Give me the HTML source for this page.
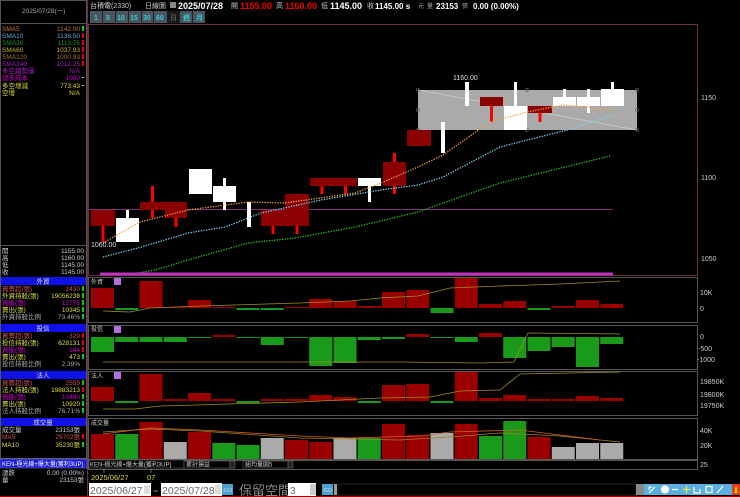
<!DOCTYPE html>
<html><head><meta charset="utf-8"><style>
html,body{margin:0;padding:0;background:#000;width:740px;height:497px;overflow:hidden}
svg{display:block}
text{font-family:"Liberation Sans","Noto Sans CJK TC",sans-serif}
.s{font-size:6.5px}
</style></head><body>
<svg id="g" width="740" height="497" viewBox="0 0 740 497" xmlns="http://www.w3.org/2000/svg">
<rect width="740" height="497" fill="#000"/>
<!-- left panel frame -->
<rect x="0.5" y="0.5" width="86" height="458" fill="none" stroke="#555"/>
<line x1="0" y1="23.5" x2="87" y2="23.5" stroke="#555"/>
<line x1="87.5" y1="0" x2="87.5" y2="497" stroke="#6a3040"/>
<text x="22" y="13" class="s" fill="#aaa">2025/07/28(一)</text>
<g class="s" font-size="6.5">
<text x="2" y="31" fill="#c87830">SMA5</text><text x="80" y="31" fill="#c87830" text-anchor="end">1142.00</text><rect x="82" y="26" width="2" height="5" fill="#0c0"/>
<text x="2" y="38" fill="#5aa8d8">SMA10</text><text x="80" y="38" fill="#5aa8d8" text-anchor="end">1138.50</text><rect x="82" y="33" width="2" height="5" fill="#e00"/>
<text x="2" y="45" fill="#1a9a1a">SMA20</text><text x="80" y="45" fill="#1a9a1a" text-anchor="end">1113.75</text><rect x="82" y="40" width="2" height="5" fill="#e00"/>
<text x="2" y="52" fill="#c8b830">SMA60</text><text x="80" y="52" fill="#c8b830" text-anchor="end">1037.93</text><rect x="82" y="47" width="2" height="5" fill="#e00"/>
<text x="2" y="59" fill="#a07040">SMA120</text><text x="80" y="59" fill="#a07040" text-anchor="end">1000.93</text><rect x="82" y="54" width="2" height="5" fill="#e00"/>
<text x="2" y="66" fill="#a020c0">SMA240</text><text x="80" y="66" fill="#a020c0" text-anchor="end">1012.25</text><rect x="82" y="61" width="2" height="5" fill="#e00"/>
<text x="2" y="73" fill="#a020c0">多空趨勢圖</text><text x="80" y="73" fill="#a020c0" text-anchor="end">N/A</text>
<text x="2" y="80" fill="#c0c" >總多成本</text><text x="80" y="80" fill="#c0c" text-anchor="end">1080</text><rect x="82" y="77" width="2" height="1" fill="#ccc"/>
<text x="2" y="88" fill="#dd4">多空增減</text><text x="80" y="88" fill="#dd4" text-anchor="end">773.43</text><rect x="82" y="85" width="2" height="1" fill="#ccc"/>
<text x="2" y="95" fill="#dd4">空增</text><text x="80" y="95" fill="#dd4" text-anchor="end">N/A</text>
</g>
<line x1="0" y1="245.5" x2="87" y2="245.5" stroke="#555"/>
<g font-size="6.5" fill="#ccc">
<text x="2" y="253">開</text><text x="84" y="253" text-anchor="end">1155.00</text>
<text x="2" y="260">高</text><text x="84" y="260" text-anchor="end">1160.00</text>
<text x="2" y="267">低</text><text x="84" y="267" text-anchor="end">1145.00</text>
<text x="2" y="274">收</text><text x="84" y="274" text-anchor="end">1145.00</text>
</g>
<!-- 外資 -->
<rect x="1" y="277" width="85" height="8" fill="#1010e8"/><text x="43" y="283.5" font-size="6.5" fill="#ddd" text-anchor="middle">外資</text>
<g font-size="6.5">
<text x="2" y="291" fill="#c85050">買賣超(張)</text><text x="80" y="291" fill="#c85050" text-anchor="end">2430</text><rect x="82" y="286" width="2" height="5" fill="#0c0"/>
<text x="2" y="298" fill="#dd4">外資持股(張)</text><text x="80" y="298" fill="#dd4" text-anchor="end">19056238</text><rect x="82" y="293" width="2" height="5" fill="#0c0"/>
<text x="2" y="305" fill="#c0c">買進(張)</text><text x="80" y="305" fill="#c0c" text-anchor="end">12775</text><rect x="82" y="300" width="2" height="5" fill="#0c0"/>
<text x="2" y="312" fill="#dd4">賣出(張)</text><text x="80" y="312" fill="#dd4" text-anchor="end">10345</text><rect x="82" y="307" width="2" height="5" fill="#0c0"/>
<text x="2" y="319" fill="#aaa">外資持股比例</text><text x="80" y="319" fill="#aaa" text-anchor="end">73.46%</text><rect x="82" y="314" width="2" height="5" fill="#0c0"/>
</g>
<rect x="1" y="324" width="85" height="8" fill="#1010e8"/><text x="43" y="330.5" font-size="6.5" fill="#ddd" text-anchor="middle">投信</text>
<g font-size="6.5">
<text x="2" y="338" fill="#c85050">買賣超(張)</text><text x="80" y="338" fill="#c85050" text-anchor="end">-329</text><rect x="82" y="333" width="2" height="5" fill="#e00"/>
<text x="2" y="345" fill="#dd4">投信持股(張)</text><text x="80" y="345" fill="#dd4" text-anchor="end">628131</text><rect x="82" y="340" width="2" height="5" fill="#e00"/>
<text x="2" y="352" fill="#c0c">買進(張)</text><text x="80" y="352" fill="#c0c" text-anchor="end">144</text><rect x="82" y="347" width="2" height="5" fill="#e00"/>
<text x="2" y="359" fill="#dd4">賣出(張)</text><text x="80" y="359" fill="#dd4" text-anchor="end">473</text><rect x="82" y="354" width="2" height="5" fill="#0c0"/>
<text x="2" y="366" fill="#aaa">投信持股比例</text><text x="80" y="366" fill="#aaa" text-anchor="end">2.39%</text>
</g>
<rect x="1" y="371" width="85" height="8" fill="#1010e8"/><text x="43" y="377.5" font-size="6.5" fill="#ddd" text-anchor="middle">法人</text>
<g font-size="6.5">
<text x="2" y="385" fill="#c85050">買賣超(張)</text><text x="80" y="385" fill="#c85050" text-anchor="end">2559</text><rect x="82" y="380" width="2" height="5" fill="#0c0"/>
<text x="2" y="392" fill="#dd4">法人持股(張)</text><text x="80" y="392" fill="#dd4" text-anchor="end">19883213</text><rect x="82" y="387" width="2" height="5" fill="#e00"/>
<text x="2" y="399" fill="#c0c">買進(張)</text><text x="80" y="399" fill="#c0c" text-anchor="end">13480</text><rect x="82" y="394" width="2" height="5" fill="#0c0"/>
<text x="2" y="406" fill="#dd4">賣出(張)</text><text x="80" y="406" fill="#dd4" text-anchor="end">10920</text><rect x="82" y="401" width="2" height="5" fill="#0c0"/>
<text x="2" y="413" fill="#aaa">法人持股比例</text><text x="80" y="413" fill="#aaa" text-anchor="end">76.71%</text><rect x="82" y="408" width="2" height="5" fill="#0c0"/>
</g>
<rect x="1" y="418" width="85" height="8" fill="#1010e8"/><text x="43" y="424.5" font-size="6.5" fill="#ddd" text-anchor="middle">成交量</text>
<g font-size="6.5">
<text x="2" y="432" fill="#ccc">成交量</text><text x="80" y="432" fill="#ccc" text-anchor="end">23153張</text>
<text x="2" y="439" fill="#c85050">MA5</text><text x="80" y="439" fill="#c85050" text-anchor="end">29702張</text><rect x="82" y="434" width="2" height="5" fill="#e00"/>
<text x="2" y="447" fill="#dd4">MA10</text><text x="80" y="447" fill="#dd4" text-anchor="end">35230張</text><rect x="82" y="442" width="2" height="5" fill="#0c0"/>
</g>
<rect x="0" y="459" width="87" height="9" fill="#1a1ae0" stroke="#888" stroke-width="0.5"/>
<text x="2" y="466" font-size="6" fill="#fff">KEN-極光線+爆大量(獲利3UP)</text>
<text x="2" y="475" font-size="6.5" fill="#ccc">漲跌</text><text x="84" y="475" font-size="6.5" fill="#ccc" text-anchor="end">0.00 (0.00%)</text>
<text x="2" y="482" font-size="6.5" fill="#ccc">量</text><text x="84" y="482" font-size="6.5" fill="#ccc" text-anchor="end">23153張</text>

<!-- top header -->
<text x="90" y="8" font-size="7" fill="#ccc">台積電(2330)</text>
<text x="145" y="8" font-size="7" fill="#ccc">日線圖</text>
<rect x="170" y="2" width="6" height="6" fill="#888"/>
<text x="178" y="9" font-size="9" font-weight="bold" fill="#fff">2025/07/28</text>
<text x="231" y="8" font-size="7" fill="#ccc">開</text><text x="240" y="9" font-size="9" font-weight="bold" fill="#e00">1155.00</text>
<text x="276" y="8" font-size="7" fill="#ccc">高</text><text x="285" y="9" font-size="9" font-weight="bold" fill="#e00">1160.00</text>
<text x="321" y="8" font-size="7" fill="#ccc">低</text><text x="330" y="9" font-size="9" font-weight="bold" fill="#fff">1145.00</text>
<text x="367" y="8" font-size="7" fill="#ccc">收</text><text x="375" y="9" font-size="8" font-weight="bold" fill="#fff">1145.00 s</text>
<text x="418" y="8" font-size="6" fill="#aaa">元</text><text x="427" y="8" font-size="6" fill="#aaa">量</text>
<text x="436" y="9" font-size="8" font-weight="bold" fill="#fff">23153</text><text x="462" y="8" font-size="6" fill="#aaa">張</text>
<text x="473" y="9" font-size="8" font-weight="bold" fill="#fff">0.00 (0.00%)</text>
<g font-size="7" font-weight="bold" fill="#3cc">
<rect x="90" y="11" width="115" height="12" fill="#4a5560"/>
<g stroke="#222" stroke-width="1"><line x1="102.5" y1="11" x2="102.5" y2="23"/><line x1="115.5" y1="11" x2="115.5" y2="23"/><line x1="128.5" y1="11" x2="128.5" y2="23"/><line x1="141.5" y1="11" x2="141.5" y2="23"/><line x1="153.5" y1="11" x2="153.5" y2="23"/><line x1="179.5" y1="11" x2="179.5" y2="23"/><line x1="192.5" y1="11" x2="192.5" y2="23"/></g>
<rect x="167" y="11" width="12" height="12" fill="#1a1a1a"/>
<text x="94" y="20">1</text><text x="106" y="20">5</text><text x="117" y="20">10</text><text x="130" y="20">15</text><text x="143" y="20">30</text><text x="156" y="20">60</text>
<text x="170" y="20" fill="#555">日</text><text x="183" y="20">週</text><text x="196" y="20">月</text>
</g>

<!-- main chart frame -->
<rect x="88.5" y="24.5" width="609" height="251" fill="none" stroke="#6a3040"/>
<g font-size="7" fill="#ccc"><text x="701" y="100">1150</text><text x="701" y="180">1100</text><text x="701" y="261">1050</text></g>
<line x1="88" y1="209.5" x2="613" y2="209.5" stroke="#803080" stroke-width="1"/>
<!-- gray rectangle tool -->
<rect x="418" y="90" width="219" height="40" fill="#aaa"/>
<line x1="418" y1="90" x2="637" y2="130" stroke="#ccc" stroke-width="0.8"/>
<g fill="none" stroke="#666" stroke-width="0.7"><circle cx="418" cy="90" r="1.5"/><circle cx="527" cy="90" r="1.5"/><circle cx="637" cy="90" r="1.5"/><circle cx="418" cy="110" r="1.5"/><circle cx="637" cy="110" r="1.5"/><circle cx="418" cy="130" r="1.5"/><circle cx="527" cy="130" r="1.5"/><circle cx="637" cy="130" r="1.5"/></g>
<g id="cand"></g>
<polyline fill="none" stroke="#f0a040" stroke-width="1.3" stroke-dasharray="1.3 1.3" points="103,243 140,222 188,210 248,202 285,203 355,193 381,183 418,167 443,155 490,122 527,112 563,105 613,110"/>
<polyline fill="none" stroke="#80d0f0" stroke-width="1.3" stroke-dasharray="1.3 1.3" points="103,257 138,248 188,233 225,227 261,213 321,200 381,190 418,185 443,177 500,147 567,130 613,115"/>
<polyline fill="none" stroke="#30c030" stroke-width="1.3" stroke-dasharray="1.3 1.3" points="138,273 155,270 188,260 248,243 295,238 355,227 418,212 460,197 500,183 553,170 610,156"/>
<text x="91" y="247" font-size="7" fill="#ddd">1060.00</text>
<text x="453" y="80" font-size="7" fill="#ddd">1160.00</text>
<rect x="100" y="272.5" width="513" height="3" fill="#c030c0"/>

<!-- sub panels -->
<g fill="none" stroke="#555"><rect x="88.5" y="277.5" width="609" height="45"/><rect x="88.5" y="325.5" width="609" height="44"/><rect x="88.5" y="371.5" width="609" height="44"/><rect x="88.5" y="418.5" width="609" height="41"/><rect x="88.5" y="460.5" width="609" height="9"/></g>
<g font-size="6" fill="#ccc"><text x="91" y="284">外資</text><text x="91" y="331">投信</text><text x="91" y="378">法人</text><text x="91" y="425">成交量</text></g>
<g fill="#b070e0"><rect x="114" y="278" width="7" height="7"/><rect x="114" y="326" width="7" height="7"/><rect x="114" y="372" width="7" height="7"/></g>
<g id="subs"></g>
<g font-size="7" fill="#ccc">
<text x="700" y="295">10K</text><text x="700" y="311">0</text>
<text x="700" y="339">0</text><text x="698" y="351">-500</text><text x="697" y="362">-1000</text>
<text x="700" y="384">19850K</text><text x="700" y="397">19800K</text><text x="700" y="408">19750K</text>
<text x="700" y="433">40K</text><text x="700" y="448">20K</text><text x="700" y="467">25</text>
</g>

<!-- bottom -->
<rect x="89" y="460" width="95" height="8" fill="#000" stroke="#777" stroke-width="0.5"/>
<text x="90" y="466.5" font-size="6" fill="#ccc">KEN-極光線+爆大量(獲利3UP)</text>
<rect x="184" y="461" width="46" height="7" fill="#000" stroke="#777" stroke-width="0.5"/><text x="186" y="466.5" font-size="6" fill="#ccc">累計損益</text><rect x="230" y="461" width="5" height="7" fill="#222" stroke="#777" stroke-width="0.5"/>
<rect x="243" y="461" width="45" height="7" fill="#000" stroke="#777" stroke-width="0.5"/><text x="245" y="466.5" font-size="6" fill="#ccc">組均量圖5</text><rect x="288" y="461" width="5" height="7" fill="#222" stroke="#777" stroke-width="0.5"/>
<line x1="104" y1="469" x2="104" y2="473" stroke="#ccc" stroke-width="0.5"/><line x1="151" y1="469" x2="151" y2="473" stroke="#ccc" stroke-width="0.5"/>
<text x="91" y="480" font-size="7.5" fill="#dd4">2025/06/27</text><text x="147" y="480" font-size="7.5" fill="#dd4">07</text>
<rect x="89" y="483" width="62" height="13" fill="#fff"/><text x="90" y="494" font-size="10.5" fill="#666">2025/06/27</text><rect x="144" y="485" width="6" height="9" fill="#ddd"/>
<text x="153" y="494" font-size="9" fill="#ccc">~</text>
<rect x="161" y="483" width="61" height="13" fill="#fff"/><text x="162" y="494" font-size="10.5" fill="#666">2025/07/28</text><rect x="215" y="485" width="6" height="9" fill="#ddd"/>
<rect x="222" y="484" width="11" height="11" fill="#4aa0d0"/><text x="223.5" y="492" font-size="5.5" fill="#cde">GO</text>
<text x="239" y="495" font-size="13" fill="#888" font-family="Liberation Serif,Noto Serif CJK SC,serif">保留空間</text>
<rect x="288" y="483" width="28" height="13" fill="#fff"/><text x="290" y="494" font-size="10" fill="#666">3</text><rect x="310" y="484" width="6" height="11" fill="#ccc"/>
<rect x="322" y="484" width="11" height="11" fill="#4aa0d0"/><text x="323.5" y="492" font-size="5.5" fill="#cde">GO</text>
<rect x="334" y="484" width="3" height="11" fill="#999"/>
<rect x="338" y="484" width="298" height="11" fill="#000" stroke="#444" stroke-width="0.5"/>
<rect x="636" y="484" width="8" height="11" fill="#888"/>
<rect x="644" y="484" width="88" height="11" fill="#5aaee0"/>
<g stroke="#fff" stroke-width="1.2" fill="none"><path d="M649 493 L655 487 M649 487 L649 490 M649 487 L652 487"/><circle cx="665" cy="489.5" r="3.5" fill="#fff"/><path d="M672 489.5 h6"/><path d="M683 489.5 h7 M686.5 486 v7" stroke="#ee3"/><path d="M694 487 v6 h6 v-4"/><rect x="706" y="486.5" width="6" height="6"/><path d="M717 493 l6 -7"/></g>
<rect x="732" y="484" width="8" height="11" fill="#e04020"/><path d="M734 493 h4 l-1 -2 v-3 a1 1 0 0 0 -2 0 v3z" fill="#fc0"/>
<rect x="0" y="496" width="740" height="1" fill="#a00"/>
</svg>
<script>
var NS="http://www.w3.org/2000/svg";
function R(g,x,y,w,h,f){var r=document.createElementNS(NS,"rect");r.setAttribute("x",x);r.setAttribute("y",y);r.setAttribute("width",w);r.setAttribute("height",Math.max(h,1));r.setAttribute("fill",f);g.appendChild(r);}
var c=document.getElementById("cand");
// [bodyX,bodyW,top,bot,wickTop,wickBot,color]
var K=[[91,24,210,226,210,242,"#8b0000"],[116,23,218,242,210,242,"#fff"],[140,25,202,210,186,218,"#8b0000"],[165,22,202,218,202,227,"#8b0000"],[189,23,169,194,169,194,"#fff"],[213,23,186,202,178,210,"#fff"],[247,4,202,227,202,227,"#fff"],[261,24,210,226,210,234,"#8b0000"],[285,24,194,226,194,234,"#8b0000"],[310,24,178,186,178,194,"#8b0000"],[334,23,178,186,178,194,"#8b0000"],[358,23,178,186,178,202,"#fff"],[383,23,162,186,153,194,"#8b0000"],[407,24,130,146,130,146,"#8b0000"],[441,4,122,153,122,153,"#fff"],[465,4,82,106,82,106,"#fff"],[480,23,97,106,97,122,"#8b0000"],[504,23,106,130,82,130,"#fff"],[528,24,106,113,106,122,"#8b0000"],[553,23,97,106,89,106,"#fff"],[577,23,97,106,89,113,"#fff"],[601,23,89,106,82,106,"#fff"]];
K.forEach(function(k){var cx=k[0]+k[1]/2;var wc=k[6]=="#fff"?"#fff":"#f00";R(c,cx-1.5,k[4],3,k[5]-k[4],wc);R(c,k[0],k[2],k[1],k[3]-k[2],k[6]);});
var s=document.getElementById("subs");
function X(i){return 91+24.25*i;}
var RED="#9a0000",GRN="#1a9a1a",GRY="#aaa";
var p1=[288,"g310",281,307,300,307,"g310","g310",307,299,301,306,292,290,"g313",278,304,301,"g310",306,300,304];
p1.forEach(function(v,i){if(typeof v=="string"){var b=+v.slice(1);R(s,X(i),308,23,b-308,GRN);}else R(s,X(i),v,23,308-v,RED);});
var p2=[352,342,342,342,338,"r335",338,345,338,366,363,340,339,"r334",338,342,"r333",358,351,347,367,344];
p2.forEach(function(v,i){if(typeof v=="string"){var t=+v.slice(1);R(s,X(i),t,23,337-t,RED);}else R(s,X(i),337,23,v-337,GRN);});
var p3=[387,"g403",374,399,393,399,"g403",399,399,395,397,"g403",385,384,"g403",372,398,395,399,399,396,398];
p3.forEach(function(v,i){if(typeof v=="string"){var b=+v.slice(1);R(s,X(i),401,23,b-401,GRN);}else R(s,X(i),v,23,401-v,RED);});
var p4=[[434,RED],[434,GRN],[422,RED],[442,GRY],[432,RED],[443,GRN],[445,GRN],[438,GRY],[440,RED],[442,RED],[438,GRY],[438,GRN],[424,RED],[435,RED],[433,GRY],[424,RED],[436,GRN],[421,GRN],[437,RED],[447,GRY],[443,GRY],[443,GRY]];
p4.forEach(function(v,i){R(s,X(i),v[0],23,459-v[0],v[1]);});
function L(pts,col){var p=document.createElementNS(NS,"polyline");p.setAttribute("points",pts);p.setAttribute("fill","none");p.setAttribute("stroke",col);p.setAttribute("stroke-width","0.8");s.appendChild(p);}
L("103,311 130,312 150,308 200,306 300,303 350,301 380,298 418,296 450,288 500,286 560,284 620,281","#a09020");
L("103,362 150,362 300,362 400,362 480,363 514,362 528,333 620,334","#a09020");
L("103,409 135,409 160,406 300,402 380,398 430,397 460,391 500,390 520,374 620,372","#a09020");
L("103,432 150,429 200,431 300,438 400,440 450,437 500,433 560,436 620,442","#a08020");
L("103,434 150,428 200,430 300,436 350,438 420,436 450,432 520,430 600,440","#d06020");
</script>
</body></html>
